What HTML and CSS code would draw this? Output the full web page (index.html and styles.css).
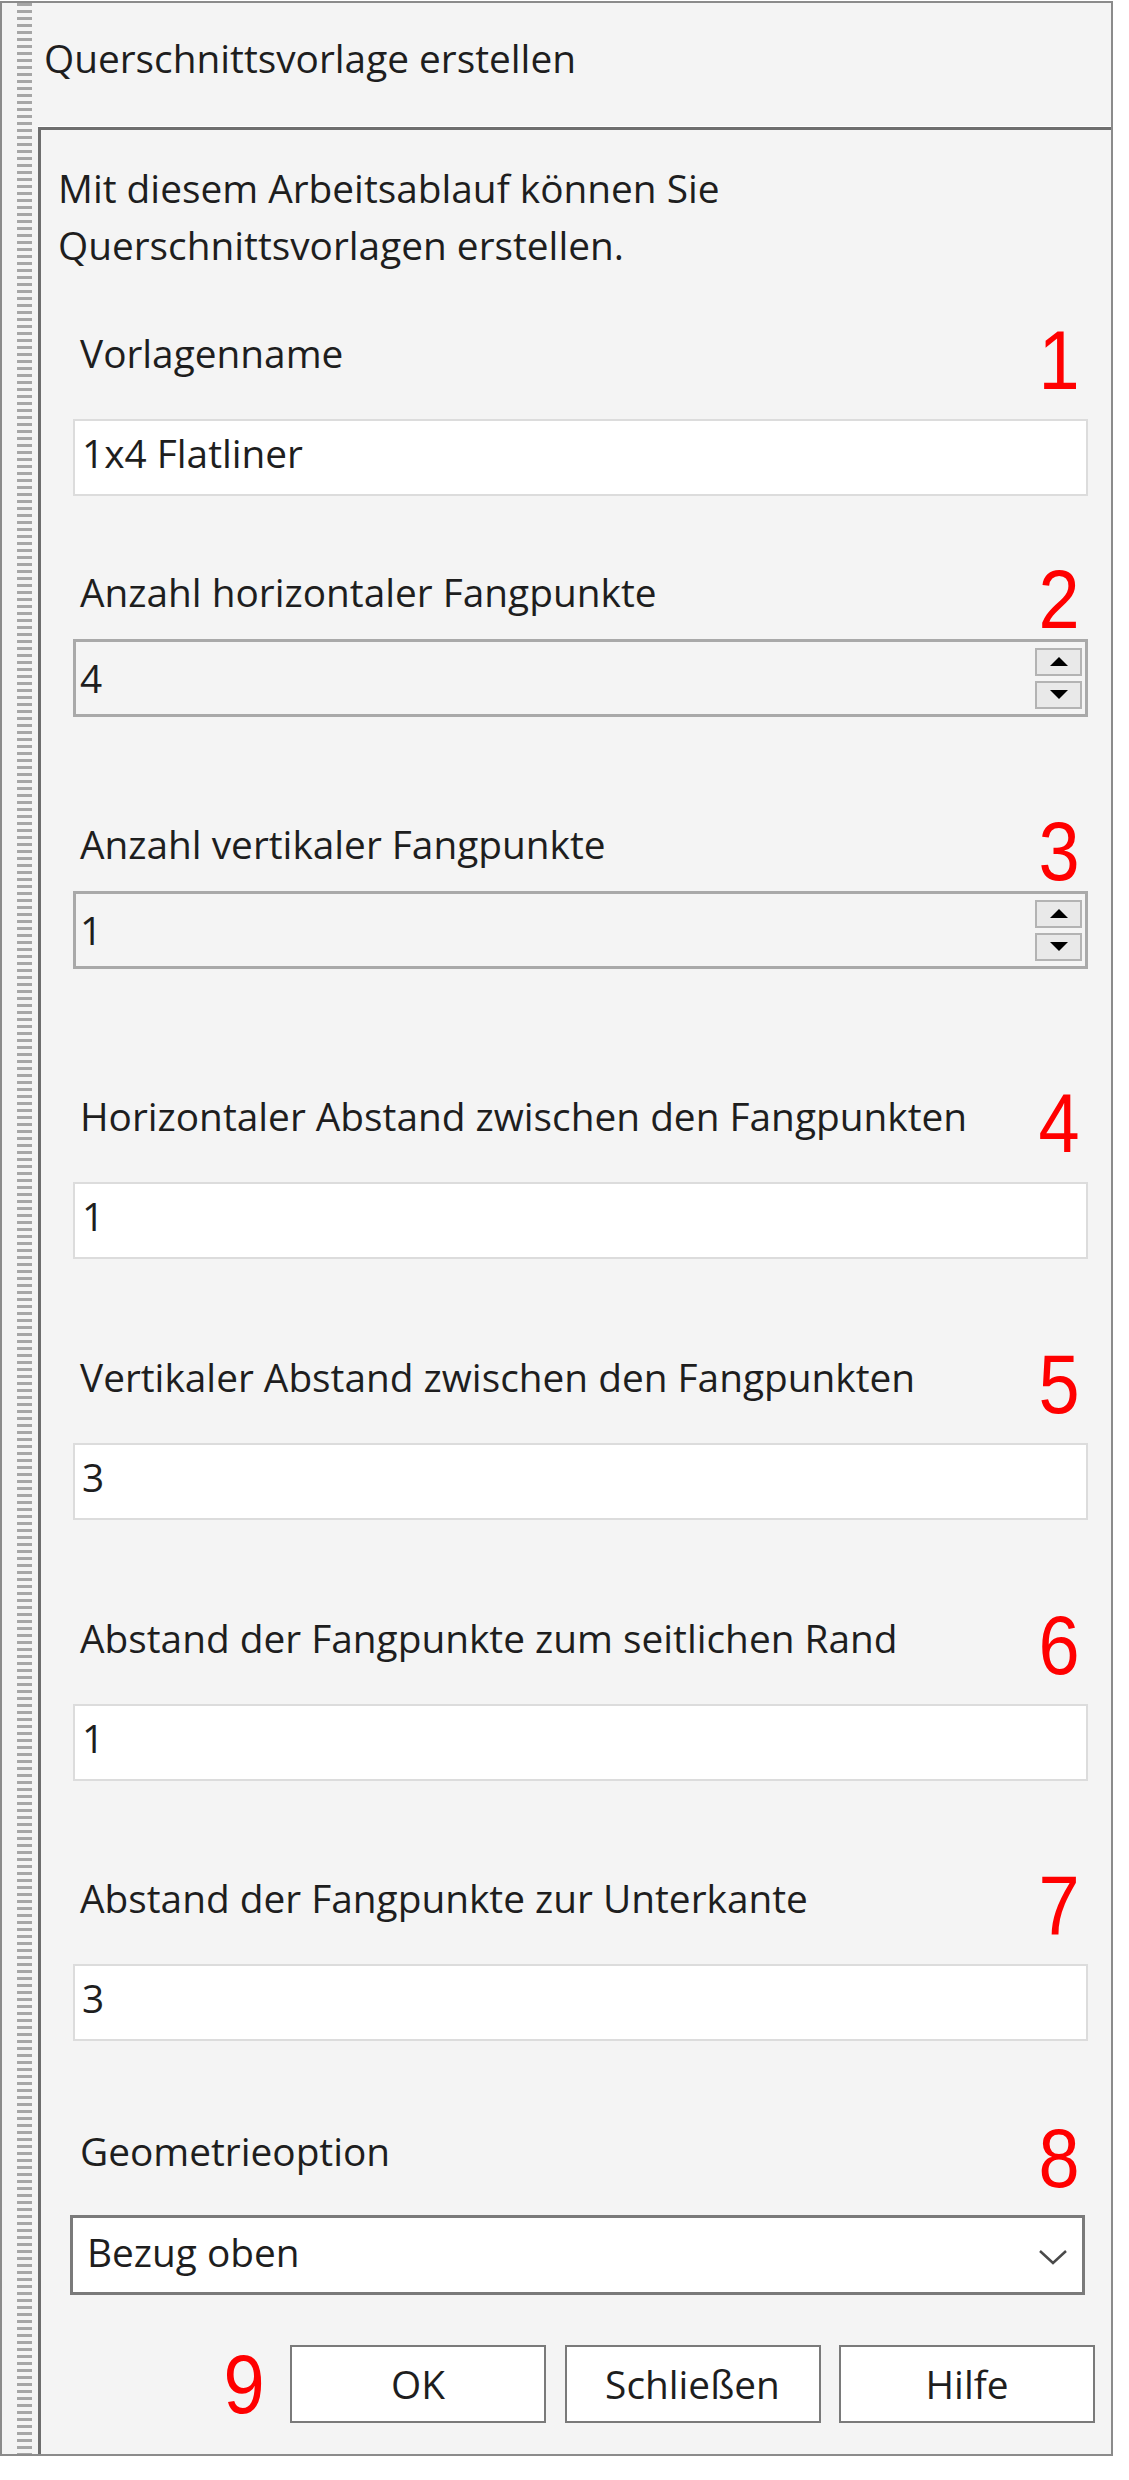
FILE: index.html
```html
<!DOCTYPE html>
<html lang="de">
<head>
<meta charset="utf-8">
<title>Querschnittsvorlage erstellen</title>
<link rel="stylesheet" href="styles.css">
</head>
<body>
<div class="window">
  <div class="grip"></div>
  <div class="main">
    <div class="titlebar">Querschnittsvorlage erstellen</div>
    <div class="panel">
      <p class="intro">Mit diesem Arbeitsablauf können Sie<br>Querschnittsvorlagen erstellen.</p>
      <div class="form">
        <div class="field field--1">
          <div class="label-row"><span class="label">Vorlagenname</span><span class="num">1</span></div>
          <div class="input">1x4 Flatliner</div>
        </div>
        <div class="field field--2">
          <div class="label-row"><span class="label">Anzahl horizontaler Fangpunkte</span><span class="num">2</span></div>
          <div class="spin">
            <span class="spin-value">4</span>
            <div class="spin-btns">
              <div class="spin-btn"><span class="tri tri--up"></span></div>
              <div class="spin-btn"><span class="tri tri--down"></span></div>
            </div>
          </div>
        </div>
        <div class="field field--3">
          <div class="label-row"><span class="label">Anzahl vertikaler Fangpunkte</span><span class="num">3</span></div>
          <div class="spin">
            <span class="spin-value">1</span>
            <div class="spin-btns">
              <div class="spin-btn"><span class="tri tri--up"></span></div>
              <div class="spin-btn"><span class="tri tri--down"></span></div>
            </div>
          </div>
        </div>
        <div class="field field--4">
          <div class="label-row"><span class="label">Horizontaler Abstand zwischen den Fangpunkten</span><span class="num">4</span></div>
          <div class="input">1</div>
        </div>
        <div class="field">
          <div class="label-row"><span class="label">Vertikaler Abstand zwischen den Fangpunkten</span><span class="num">5</span></div>
          <div class="input">3</div>
        </div>
        <div class="field">
          <div class="label-row"><span class="label">Abstand der Fangpunkte zum seitlichen Rand</span><span class="num">6</span></div>
          <div class="input">1</div>
        </div>
        <div class="field field--7">
          <div class="label-row"><span class="label">Abstand der Fangpunkte zur Unterkante</span><span class="num">7</span></div>
          <div class="input">3</div>
        </div>
        <div class="field field--8">
          <div class="label-row"><span class="label">Geometrieoption</span><span class="num">8</span></div>
          <div class="select">
            <span class="select-value">Bezug oben</span>
            <svg class="chevron" width="30" height="16" viewBox="0 0 30 16"><polyline points="2,2 15,14 28,2" fill="none" stroke="#4a4a4a" stroke-width="2.5"/></svg>
          </div>
        </div>
        <div class="actions">
          <span class="num num--9">9</span>
          <button class="btn">OK</button>
          <button class="btn">Schließen</button>
          <button class="btn">Hilfe</button>
        </div>
      </div>
    </div>
  </div>
</div>
</body>
</html>
```

FILE: styles.css
```css
* {
  box-sizing: border-box;
}

html,
body {
  margin: 0;
  padding: 0;
  background: #ffffff;
}

body {
  font-family: "Open Sans", "Noto Sans", sans-serif;
  font-size: 38.8px;
  color: #1e1e1e;
}

.window {
  margin-top: 1px;
  width: 1113px;
  height: 2455px;
  border: 2px solid #8b8b8b;
  background: #f4f4f4;
  display: flex;
}

.grip {
  width: 15px;
  margin-left: 15px;
  margin-right: 6px;
  background: repeating-linear-gradient(to bottom, #a6a6a6 0 3px, transparent 3px 7px);
}

.main {
  flex: 1;
  display: flex;
  flex-direction: column;
}

.titlebar {
  height: 124px;
  padding: 27px 0 0 6px;
  line-height: 57px;
}

.panel {
  flex: 1;
  border-top: 3px solid #6e6e6e;
  border-left: 3px solid #6e6e6e;
  box-shadow: 0 -1px 0 #ffffff;
  display: flex;
  flex-direction: column;
}

.intro {
  margin: 0;
  padding: 30px 0 0 17px;
  line-height: 57px;
}

.form {
  padding: 0 23px 0 32px;
  display: flex;
  flex-direction: column;
}

.field {
  margin-top: 90px;
}

.field--1 { margin-top: 51px; }
.field--2 { margin-top: 68px; }
.field--3 { margin-top: 99px; }
.field--4 { margin-top: 119px; }
.field--7 { margin-top: 89px; }
.field--8 { margin-top: 82px; }

.label-row {
  height: 57px;
  line-height: 57px;
  display: flex;
  justify-content: space-between;
  align-items: flex-start;
  padding: 0 8px 0 7px;
}

.num {
  display: inline-block;
  font-family: "Liberation Sans", Arial, sans-serif;
  font-size: 84px;
  line-height: 70px;
  color: #ff0000;
  transform: scaleX(0.88);
  transform-origin: right center;
}

.input {
  margin-top: 37px;
  height: 77px;
  border: 2px solid #dcdcdc;
  background: #ffffff;
  padding-left: 7px;
  line-height: 65px;
}

.spin {
  margin-top: 18px;
  height: 78px;
  border: 3px solid #a9a9a9;
  display: flex;
  align-items: center;
  padding-left: 4px;
}

.spin-value {
  flex: 1;
  line-height: 70px;
}

.spin-btns {
  display: flex;
  flex-direction: column;
  gap: 5px;
  margin-right: 3px;
}

.spin-btn {
  width: 47px;
  height: 28px;
  background: #e9e9e9;
  border: 2px solid #b3b3b3;
  display: flex;
  align-items: center;
  justify-content: center;
}

.tri {
  width: 0;
  height: 0;
  border-left: 9px solid transparent;
  border-right: 9px solid transparent;
}

.tri--up {
  border-bottom: 9px solid #000000;
}

.tri--down {
  border-top: 9px solid #000000;
}

.select {
  margin: 35px 3px 0 -3px;
  height: 80px;
  border: 3px solid #7a7a7a;
  background: #ffffff;
  display: flex;
  align-items: center;
  justify-content: space-between;
  padding: 0 14px 6px 14px;
}

.chevron {
  margin-top: 10px;
}

.actions {
  margin-top: 50px;
  margin-right: -7px;
  display: flex;
  align-items: center;
  justify-content: flex-end;
  gap: 18.5px;
}

.num--9 {
  line-height: 78px;
  margin-right: 7px;
}

.btn {
  width: 256px;
  height: 78px;
  padding: 0;
  border: 2px solid #7a7a7a;
  border-radius: 0;
  background: #ffffff;
  font-family: inherit;
  font-size: 38.8px;
  color: #1e1e1e;
  line-height: 74px;
  text-align: center;
}
```
